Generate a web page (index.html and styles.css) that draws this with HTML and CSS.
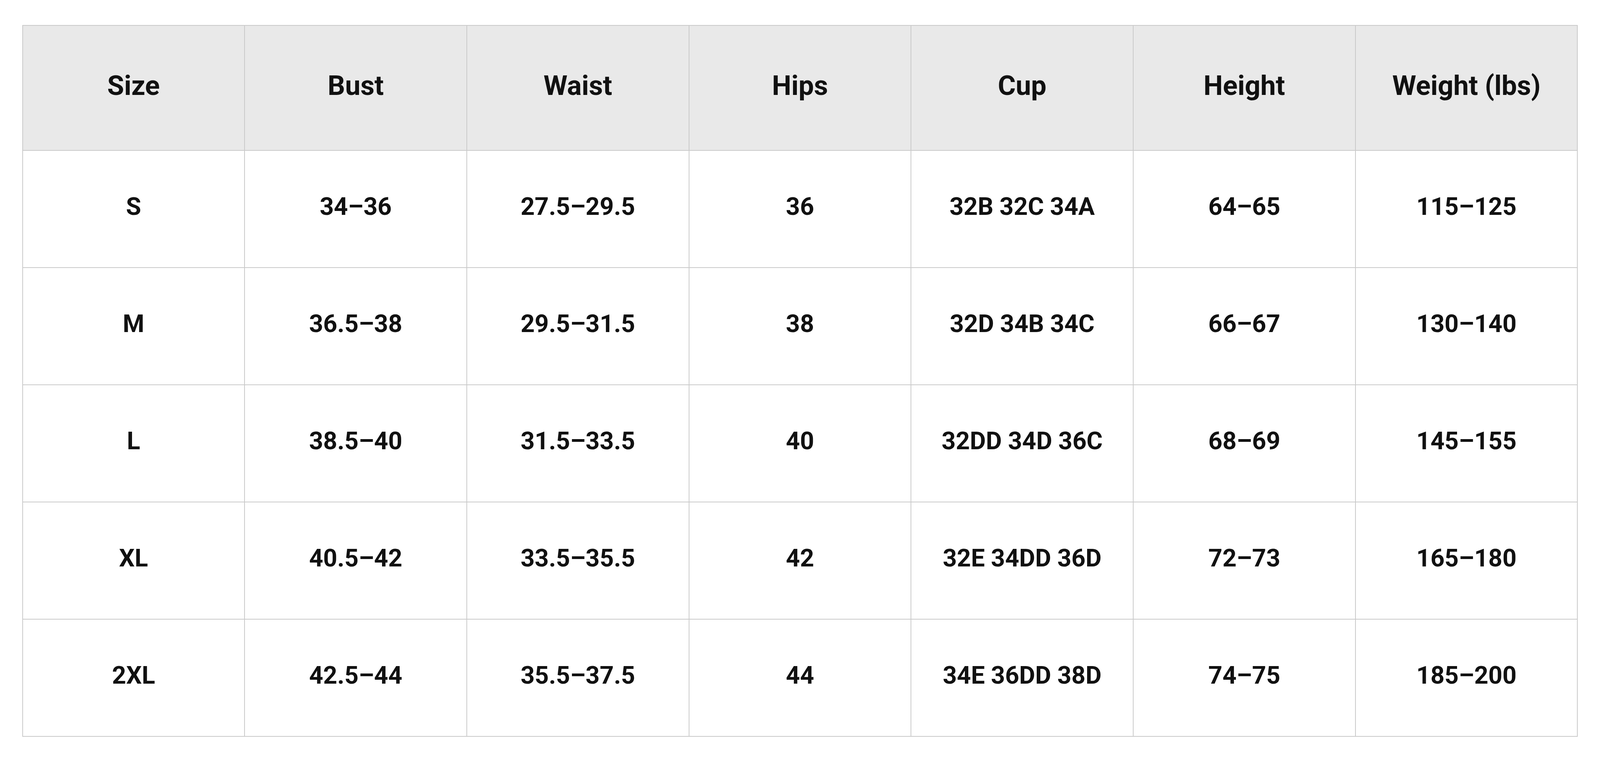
FILE: index.html
```html
<!DOCTYPE html>
<html>
<head>
<meta charset="utf-8">
<link rel="stylesheet" href="styles.css">
</head>
<body>
<main class="page">
  <table class="size-chart">
    <thead>
      <tr><th>Size</th><th>Bust</th><th>Waist</th><th>Hips</th><th>Cup</th><th>Height</th><th>Weight (lbs)</th></tr>
    </thead>
    <tbody>
      <tr><td>S</td><td>34–36</td><td>27.5–29.5</td><td>36</td><td>32B 32C 34A</td><td>64–65</td><td>115–125</td></tr>
      <tr><td>M</td><td>36.5–38</td><td>29.5–31.5</td><td>38</td><td>32D 34B 34C</td><td>66–67</td><td>130–140</td></tr>
      <tr><td>L</td><td>38.5–40</td><td>31.5–33.5</td><td>40</td><td>32DD 34D 36C</td><td>68–69</td><td>145–155</td></tr>
      <tr><td>XL</td><td>40.5–42</td><td>33.5–35.5</td><td>42</td><td>32E 34DD 36D</td><td>72–73</td><td>165–180</td></tr>
      <tr><td>2XL</td><td>42.5–44</td><td>35.5–37.5</td><td>44</td><td>34E 36DD 38D</td><td>74–75</td><td>185–200</td></tr>
    </tbody>
  </table>
</main>
</body>
</html>
```
FILE: styles.css
```css
html, body {
  margin: 0;
  padding: 0;
  background: #ffffff;
}
.page {
  padding: 64px 1.38vw 0 1.38vw;
  font-family: Roboto, "Liberation Sans", sans-serif;
  color: #111111;
}
.size-chart {
  width: 100%;
  border-collapse: collapse;
  table-layout: fixed;
}
.size-chart th,
.size-chart td {
  border: 2px solid #cacaca;
  text-align: center;
  vertical-align: middle;
  font-weight: 700;
  line-height: 1.2;
  padding: 0 0 12px 0;
  white-space: nowrap;
}
.size-chart th {
  background: #e9e9e9;
  height: 306px;
  font-size: 70px;
}
.size-chart td {
  height: 286px;
  font-size: 63px;
}
```
